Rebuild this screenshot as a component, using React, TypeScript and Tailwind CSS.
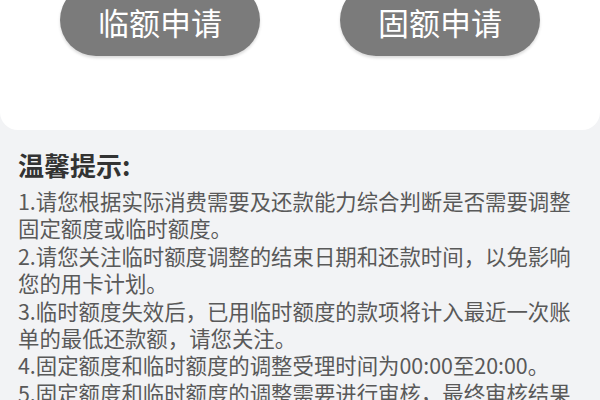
import React from 'react';

const lines = [
  '1.请您根据实际消费需要及还款能力综合判断是否需要调整',
  '固定额度或临时额度。',
  '2.请您关注临时额度调整的结束日期和还款时间，以免影响',
  '您的用卡计划。',
  '3.临时额度失效后，已用临时额度的款项将计入最近一次账',
  '单的最低还款额，请您关注。',
  '4.固定额度和临时额度的调整受理时间为00:00至20:00。',
  '5.固定额度和临时额度的调整需要进行审核，最终审核结果',
];

export default function App() {
  return (
    <div
      className="w-[600px] h-[400px] overflow-hidden bg-[#f2f3f5]"
      style={{ fontFamily: '"Noto Sans CJK SC", "Noto Sans", sans-serif' }}
    >
      <div className="h-[130px] bg-white rounded-b-[18px] overflow-hidden">
        <div className="flex justify-between px-[60px] -mt-[16px]">
          <button className="w-[200px] h-[72px] rounded-full bg-[#7b7b7b] text-white text-[31px] pt-[4px] shadow-[0_2px_3px_rgba(0,0,0,0.15)]">
            临额申请
          </button>
          <button className="w-[200px] h-[72px] rounded-full bg-[#7b7b7b] text-white text-[31px] pt-[4px] shadow-[0_2px_3px_rgba(0,0,0,0.15)]">
            固额申请
          </button>
        </div>
      </div>
      <div className="px-[18px] pt-[18px]">
        <h2 className="text-[26px] font-bold text-[#333] leading-[34px]">温馨提示:</h2>
        <div className="mt-[5px] text-[21.4px] leading-[27.4px] text-[#595959] whitespace-nowrap">
          {lines.map((t) => (
            <p key={t}>{t}</p>
          ))}
        </div>
      </div>
    </div>
  );
}
